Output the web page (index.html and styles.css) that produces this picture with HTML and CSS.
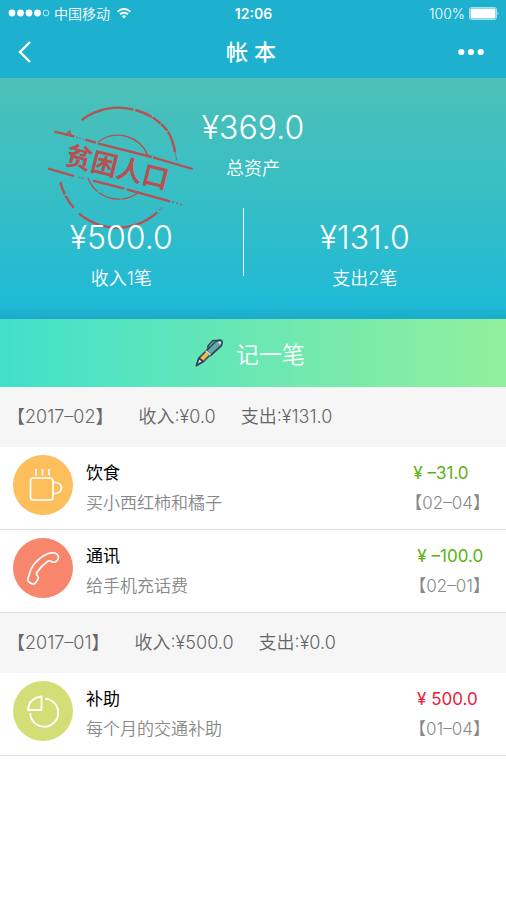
FILE: index.html
```html
<!DOCTYPE html>
<html lang="zh-CN">
<head>
	<meta charset="utf-8">
	<meta name="viewport" content="width=device-width, initial-scale=1">
	<title>帐本</title>
	<link rel="stylesheet" href="styles.css">
</head>
<body>

<header class="topbar">
	<div class="status">
		<div class="status-left">
			<svg class="signal" width="42" height="8" viewBox="0 0 42 8" fill="#fff">
				<circle cx="4" cy="4" r="3.4"/>
				<circle cx="12.5" cy="4" r="3.4"/>
				<circle cx="21" cy="4" r="3.4"/>
				<circle cx="29.5" cy="4" r="3.4"/>
				<circle cx="38" cy="4" r="2.9" fill="none" stroke="#fff" stroke-width="0.7"/>
			</svg>
			<span class="carrier">中国移动</span>
			<svg class="wifi" width="14" height="12" viewBox="0 0 14 12" fill="none" stroke="#fff" stroke-width="2">
				<path d="M0.7 4.6a9 9 0 0 1 12.6 0"/>
				<path d="M3.1 7.3a5.6 5.6 0 0 1 7.8 0"/>
				<path d="M7 11.6L4.9 9.3a3 3 0 0 1 4.2 0z" fill="#fff" stroke="none"/>
			</svg>
		</div>
		<span class="clock">12:06</span>
		<div class="status-right">
			<span class="percent">100%</span>
			<svg width="30" height="13" viewBox="0 0 30 13">
				<rect x="0.5" y="0.5" width="27" height="12" rx="2" fill="none" stroke="#fff" stroke-opacity="0.6"/>
				<rect x="1.5" y="1.5" width="25" height="10" rx="1" fill="#fff"/>
				<path d="M28.7 4.6q1.3 1.9 0 3.8z" fill="#fff"/>
			</svg>
		</div>
	</div>
	<nav class="navbar">
		<a class="back" href="#" aria-label="返回">
			<svg width="14" height="22" viewBox="0 0 14 22" fill="none" stroke="#fff" stroke-width="2.4">
				<path d="M12 1L2 11l10 10"/>
			</svg>
		</a>
		<h1>帐 本</h1>
		<button class="more" aria-label="更多">
			<svg width="26" height="8" viewBox="0 0 26 8" fill="#fff">
				<circle cx="3.3" cy="4" r="3.1"/>
				<circle cx="13" cy="4" r="3.1"/>
				<circle cx="22.7" cy="4" r="3.1"/>
			</svg>
		</button>
	</nav>
</header>

<section class="summary">
	<!-- stamp -->
	<svg class="stamp" viewBox="0 0 540 450" fill="none" stroke="#b94f50">
		<g stroke-width="7">
			<path d="M155 90A179 179 0 0 1 310 59"/>
			<path d="M316 60A179 179 0 0 1 412 122" stroke-dasharray="54 3 30 2 60"/>
			<path d="M414 125A179 179 0 0 1 435 187"/>
			<path d="M436 191A179 179 0 0 1 440 214" stroke-width="4" stroke-dasharray="4 4"/>
			<path d="M91 276A179 179 0 0 0 131 353" stroke-dasharray="40 4 60"/>
			<path d="M147 371A179 179 0 0 0 382 367" stroke-dasharray="72 3 100 4 200"/>
			<path d="M388 361l10-9" stroke-width="4" stroke-dasharray="4 4"/>
		</g>
		<g stroke-width="4">
			<path d="M205 155A98 98 0 0 1 354 197"/>
			<path d="M174 264A98 98 0 0 0 323 309" stroke-dasharray="50 5 70 3 100"/>
		</g>
		<g stroke-width="7">
			<path d="M73 125l60 14"/>
			<path d="M110 133l9-10 3 12" stroke-width="4"/>
			<path d="M138 142l22 6" stroke-width="3" stroke-dasharray="5 5"/>
			<path d="M166 149l32 9M203 160l162 41M369 202l119 35"/>
			<path d="M54 236l78 22"/>
			<path d="M146 262l18 4" stroke-width="4" stroke-dasharray="5 5"/>
			<path d="M189 272l94 24M290 298l130 36"/>
			<path d="M426 335l32 10" stroke-width="4" stroke-dasharray="6 7"/>
		</g>
		<text class="stamp-text" x="262" y="260" text-anchor="middle" transform="rotate(14 262 232)">贫困人口</text>
	</svg>
	<div class="total">
		<div class="money">¥369.0</div>
		<div class="label">总资产</div>
	</div>
	<div class="inout">
		<div class="side">
			<div class="money">¥500.0</div>
			<div class="label">收入1笔</div>
		</div>
		<div class="divider"></div>
		<div class="side">
			<div class="money">¥131.0</div>
			<div class="label">支出2笔</div>
		</div>
	</div>
</section>

<button class="add">
	<svg width="28" height="28" viewBox="0 0 28 28" stroke="#33485a" stroke-width="1.7" stroke-linejoin="round" stroke-linecap="round">
		<path d="M1.5 26.5L4 19 11 12 15 16 8.5 22.5z" fill="#f5b945"/>
		<path d="M1.5 26.5L4 19 8 22.5z" fill="#dce7df"/>
		<path d="M11.5 11.5L20.5 2.5Q25 0.5 26.5 1.5Q28 3.5 26 7L15.5 16.5z" fill="#63a9a8"/>
		<path d="M23 3q3-1 3 0t-1 3z" fill="#e9eeee" stroke="none"/>
		<path d="M13 10V7L18 1.5h5" fill="none"/>
		<path d="M11.3 12.3l3.4 3.2" stroke="#dce7df"/>
	</svg>
	<span>记一笔</span>
</button>

<main>
	<h2 class="month"><span class="month-name">【2017–02】</span><span class="month-in">收入:¥0.0</span><span>支出:¥131.0</span></h2>
	<ul class="list">
		<li>
			<svg class="icon food" viewBox="0 0 60 60" fill="none" stroke="#fff" stroke-width="1.7">
				<rect x="17.5" y="23" width="22.5" height="22" rx="3"/>
				<path d="M40 27.5h2.5a6 5.5 0 0 1 0 11h-2.5"/>
				<path d="M23 14v6.5M29.5 14v6.5M36 14v6.5"/>
			</svg>
			<div class="detail">
				<div class="name">饮食</div>
				<div class="note">买小西红柿和橘子</div>
			</div>
			<div class="right">
				<div class="amount out">¥ –31.0</div>
				<div class="date">【02–04】</div>
			</div>
		</li>
		<li>
			<svg class="icon phone" viewBox="0 0 60 60" fill="none" stroke="#fff" stroke-width="1.7" stroke-linejoin="round">
				<path d="M34 16Q38 14.5 42 15Q45 16 45.5 19.5Q45.5 21.5 43 23.5Q41 25 38.5 23.5Q36.5 22 34.5 23.5Q28 28 23.5 35Q23 36.5 25 38.5Q26 40 24.5 42L22 45.5Q20.5 46.5 18.5 45.5Q15.5 44.5 15 42Q14.5 40.5 16 37.5Q17.5 30 22.5 24.5Q28 18.5 34 16z"/>
			</svg>
			<div class="detail">
				<div class="name">通讯</div>
				<div class="note">给手机充话费</div>
			</div>
			<div class="right">
				<div class="amount out">¥ –100.0</div>
				<div class="date">【02–01】</div>
			</div>
		</li>
	</ul>

	<h2 class="month"><span class="month-name">【2017–01】</span><span class="month-in">收入:¥500.0</span><span>支出:¥0.0</span></h2>
	<ul class="list">
		<li>
			<svg class="icon subsidy" viewBox="0 0 60 60" fill="none" stroke="#fff" stroke-width="1.8">
				<path d="M28.5 15.5v13.5h-13.5q0.5-11.5 13.5-13.5z"/>
				<path d="M32 17.7A14 14 0 1 1 17.2 32"/>
			</svg>
			<div class="detail">
				<div class="name">补助</div>
				<div class="note">每个月的交通补助</div>
			</div>
			<div class="right">
				<div class="amount in">¥ 500.0</div>
				<div class="date">【01–04】</div>
			</div>
		</li>
	</ul>
</main>

</body>
</html>
```
FILE: styles.css
```css
* {
  box-sizing: border-box;
}

body {
  margin: 0;
  background-color: white;
  color: #666;
  font-family: Inter, "Noto Sans CJK SC", sans-serif;
  font-weight: 350;
}

button {
  border: none;
  padding: 0;
  background: none;
  font: inherit;
  cursor: pointer;
}

svg {
  display: block;
}

/* Status bar and title */
.topbar {
  background-color: #1eb1cf;
  color: white;
}

.status {
  display: grid;
  grid-template-columns: 1fr auto 1fr;
  align-items: center;
  height: 26px;
  padding: 0 7px 0 8px;
  font-size: 14px;
}

.status-left, .status-right {
  display: flex;
  align-items: center;
}

.status-left {
  gap: 4px;
}

.wifi {
  margin-left: 3px;
}

.status-right {
  justify-content: flex-end;
  gap: 4px;
}

.clock {
  font-weight: 600;
}

.navbar {
  display: grid;
  grid-template-columns: 1fr auto 1fr;
  align-items: center;
  height: 52px;
  padding: 0 22px 0 18px;
}

.navbar h1 {
  margin: 0;
  font-size: 22px;
  line-height: 32px;
  font-weight: 500;
}

.more {
  justify-self: end;
}

/* Totals */
.summary {
  position: relative;
  height: 241px;
  padding-top: 28px;
  background: linear-gradient(#4dc0b8, #36bec6 50%, #1fb9d6 95%, #1caac8);
  color: white;
  text-align: center;
}

.stamp {
  position: absolute;
  left: 30px;
  top: 12px;
  width: 180px;
  height: 150px;
}

.stamp-text {
  fill: #b94f50;
  stroke: none;
  font-family: "Noto Sans CJK SC", sans-serif;
  font-size: 79px;
  font-weight: 700;
}

.total, .inout {
  position: relative;
}

.money {
  font-size: 32px;
  line-height: 44px;
}

.label {
  margin-top: 6px;
  font-size: 18px;
  line-height: 26px;
}

.inout {
  display: flex;
  margin-top: 26px;
  padding-right: 20px;
}

.side {
  flex: 1;
  padding-top: 8px;
}

.divider {
  width: 1px;
  height: 68px;
  background-color: white;
}

/* New record button */
.add {
  display: flex;
  align-items: center;
  justify-content: center;
  gap: 13px;
  width: 100%;
  height: 68px;
  padding-right: 6px;
  background: linear-gradient(to right, #42e0ca, #92ef9d);
  color: white;
  font-size: 23px;
}

/* Records */
.month {
  display: flex;
  align-items: center;
  height: 60px;
  margin: 0;
  padding: 0 0 5px 7px;
  background-color: #f6f6f6;
  font-size: 18px;
  font-weight: 350;
}

.month-name, .month-in {
  margin-right: 25px;
}

.list {
  margin: 0;
  padding: 0;
  list-style: none;
}

.list li {
  display: flex;
  height: 83px;
  padding: 8px 16px 0 13px;
  border-bottom: 1px solid #ddd;
}

.icon {
  width: 60px;
  height: 60px;
  margin-right: 13px;
  border-radius: 50%;
}

.food {
  background-color: #fdbe5c;
}

.phone {
  background-color: #f8866c;
}

.subsidy {
  background-color: #d3df76;
}

.detail {
  flex: 1;
}

.detail, .right {
  padding-top: 3px;
  font-size: 17px;
  line-height: 30px;
}

.name {
  color: black;
  font-weight: 400;
}

.note, .date {
  color: #888;
}

.amount {
  padding-left: 8px;
  font-weight: 400;
}

.out {
  color: #5bb210;
}

.in {
  color: #e9203c;
}
```
